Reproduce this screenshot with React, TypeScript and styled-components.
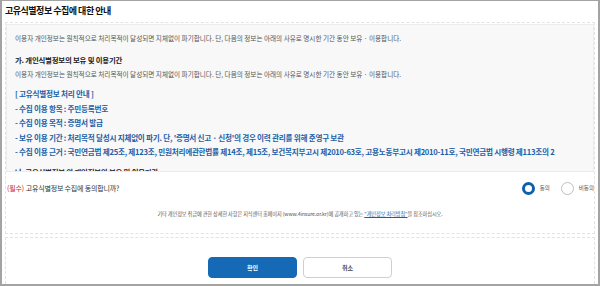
import styled, { createGlobalStyle } from 'styled-components'

const GlobalStyle = createGlobalStyle`
  html, body {
    margin: 0;
    padding: 0;
    background: #ffffff;
  }
  * {
    box-sizing: border-box;
  }
`

const FONT = `'Noto Sans CJK KR', 'Noto Sans', sans-serif`
const BLUE = '#1b5fa8'

const Frame = styled.div`
  width: 600px;
  height: 286px;
  border: 2px solid #a3a3a3;
  border-top-width: 1px;
  background: #fff;
  font-family: ${FONT};
  color: #333;
  display: flex;
  flex-direction: column;
  overflow: hidden;
`

const Title = styled.h1`
  margin: 0;
  padding: 3px 3px 0;
  height: 21px;
  font-size: 9px;
  font-weight: 700;
  letter-spacing: -0.5px;
  color: #111;
  line-height: 14px;
`

const Section = styled.div`
  margin: 0 3px;
  border: 1px dashed #e3e3e3;
`

const InfoSection = styled(Section)`
  height: 212px;
  display: flex;
  flex-direction: column;
`

const ButtonSection = styled(Section)`
  margin-top: 3px;
  flex: 1;
  display: flex;
  justify-content: center;
  align-items: flex-start;
  gap: 6px;
  padding-top: 19px;
  border-bottom: none;
`

const ScrollBox = styled.div`
  height: 148px;
  flex: none;
  margin: 1px 0 0 0;
  background: #f8f8f8;
  border: 1px solid #ececec;
  overflow-y: scroll;
  padding: 6px 8px 22px 8px;

  &::-webkit-scrollbar {
    width: 4px;
  }
  &::-webkit-scrollbar-track {
    background: transparent;
  }
  &::-webkit-scrollbar-thumb {
    background: #9c9c9c;
    border-radius: 2px;
  }
`

const Paragraph = styled.p`
  margin: 0;
  font-size: 6.6px;
  line-height: 14px;
  color: #555;
  white-space: nowrap;
`

const Heading = styled.h2<{ $gap?: number }>`
  margin: ${(p) => p.$gap ?? 8}px 0 0;
  font-size: 7.4px;
  font-weight: 700;
  line-height: 14px;
  letter-spacing: -0.2px;
  color: #222;
  white-space: nowrap;
`

const BlueList = styled.ul`
  list-style: none;
  margin: 6px 0 0;
  padding: 0;
`

const BlueItem = styled.li`
  font-size: 7.6px;
  font-weight: 700;
  line-height: 14.5px;
  letter-spacing: -0.25px;
  color: ${BLUE};
  white-space: nowrap;
`

const ConsentRow = styled.div`
  display: flex;
  align-items: center;
  justify-content: space-between;
  height: 26px;
  margin-top: 3px;
  padding: 0 0 0 1px;
`

const Question = styled.p`
  margin: 0;
  display: flex;
  align-items: center;
  gap: 2px;
  font-size: 7px;
  line-height: 12px;
  color: #333;
  letter-spacing: -0.2px;
  white-space: nowrap;
`

const Required = styled.span`
  color: #c8262b;
`

const RadioGroup = styled.div`
  display: flex;
  align-items: center;
  gap: 11px;
`

const RadioLabel = styled.label`
  display: flex;
  align-items: center;
  gap: 5px;
  font-size: 5.5px;
  color: #555;
`

const RadioCircle = styled.span<{ $checked?: boolean }>`
  width: 13px;
  height: 13px;
  border-radius: 50%;
  background: #fff;
  border: ${(p) => (p.$checked ? `3.5px solid #0f5fab` : `1px solid #bfbfbf`)};
`

const Notice = styled.p`
  margin: 9px 0 0;
  text-align: center;
  font-size: 5.2px;
  color: #555;
  letter-spacing: -0.1px;
`

const NoticeLink = styled.a`
  color: ${BLUE};
  text-decoration: underline;
`

const Button = styled.button<{ $primary?: boolean }>`
  width: 89px;
  height: 21px;
  border-radius: 4px;
  font-family: ${FONT};
  font-size: 6px;
  font-weight: 700;
  cursor: pointer;
  background: ${(p) => (p.$primary ? '#1669b4' : '#fff')};
  color: ${(p) => (p.$primary ? '#fff' : '#444')};
  border: 1px solid ${(p) => (p.$primary ? '#1669b4' : '#cfcfcf')};
`

const intro =
  '이용자 개인정보는 원칙적으로 처리목적이 달성되면 지체없이 파기합니다. 단, 다음의 정보는 아래의 사유로 명시한 기간 동안 보유 · 이용합니다.'

const items = [
  '- 수집 이용 항목 : 주민등록번호',
  '- 수집 이용 목적 : 증명서 발급',
  "- 보유 이용 기간 : 처리목적 달성시 지체없이 파기. 단, '증명서 신고 · 신청'의 경우 이력 관리를 위해 준영구 보관",
  '- 수집 이용 근거 : 국민연금법 제25조, 제123조, 민원처리에관한법률 제14조, 제15조, 보건복지부고시 제2010-63호, 고용노동부고시 제2010-11호, 국민연금법 시행령 제113조의 2',
]

export default function App() {
  return (
    <>
      <GlobalStyle />
      <Frame>
        <Title>고유식별정보 수집에 대한 안내</Title>
        <InfoSection>
          <ScrollBox>
            <Paragraph>{intro}</Paragraph>
            <Heading>가. 개인식별정보의 보유 및 이용기간</Heading>
            <Paragraph>{intro}</Paragraph>
            <BlueList>
              <BlueItem>[ 고유식별정보 처리 안내 ]</BlueItem>
              {items.map((item) => (
                <BlueItem key={item}>{item}</BlueItem>
              ))}
            </BlueList>
            <Heading $gap={5}>나. 고유식별정보 외 개인정보의 보유 및 이용기간</Heading>
          </ScrollBox>
          <ConsentRow>
            <Question>
              <Required>(필수)</Required>
              <span>고유식별정보 수집에 동의합니까?</span>
            </Question>
            <RadioGroup>
              <RadioLabel>
                <RadioCircle $checked />
                동의
              </RadioLabel>
              <RadioLabel>
                <RadioCircle />
                비동의
              </RadioLabel>
            </RadioGroup>
          </ConsentRow>
          <Notice>
            기타 개인정보 취급에 관한 상세한 사항은 지식센터 홈페이지 (www.4insure.or.kr)에 공개하고 있는{' '}
            <NoticeLink href="#">"개인정보 처리방침"</NoticeLink>을 참조하십시오.
          </Notice>
        </InfoSection>
        <ButtonSection>
          <Button $primary>확인</Button>
          <Button>취소</Button>
        </ButtonSection>
      </Frame>
    </>
  )
}
